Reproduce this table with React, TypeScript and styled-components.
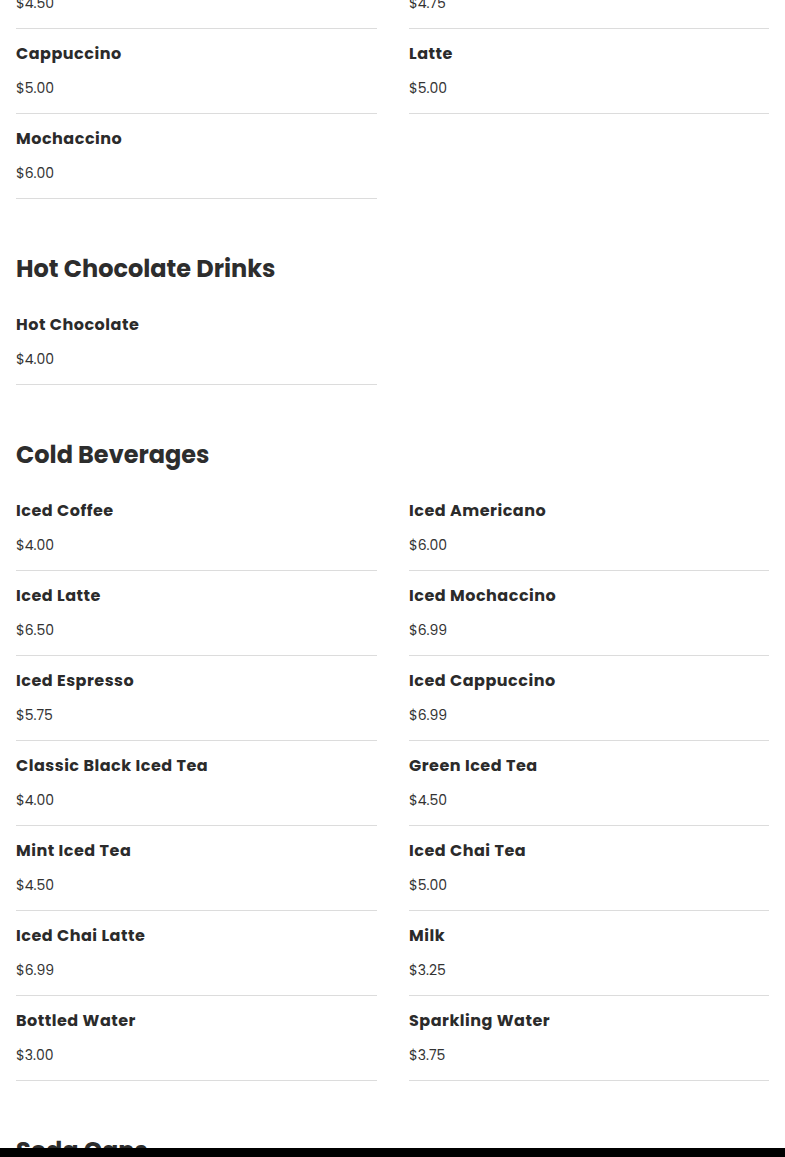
import React from "react";
import styled, { createGlobalStyle } from "styled-components";

interface MenuItem {
	name: string;
	price: string;
}

interface MenuSection {
	title?: string;
	items: MenuItem[];
}

const sections: MenuSection[] = [
	{
		items: [
			{ name: "Americano", price: "$4.50" },
			{ name: "Espresso", price: "$4.75" },
			{ name: "Cappuccino", price: "$5.00" },
			{ name: "Latte", price: "$5.00" },
			{ name: "Mochaccino", price: "$6.00" },
		],
	},
	{
		title: "Hot Chocolate Drinks",
		items: [{ name: "Hot Chocolate", price: "$4.00" }],
	},
	{
		title: "Cold Beverages",
		items: [
			{ name: "Iced Coffee", price: "$4.00" },
			{ name: "Iced Americano", price: "$6.00" },
			{ name: "Iced Latte", price: "$6.50" },
			{ name: "Iced Mochaccino", price: "$6.99" },
			{ name: "Iced Espresso", price: "$5.75" },
			{ name: "Iced Cappuccino", price: "$6.99" },
			{ name: "Classic Black Iced Tea", price: "$4.00" },
			{ name: "Green Iced Tea", price: "$4.50" },
			{ name: "Mint Iced Tea", price: "$4.50" },
			{ name: "Iced Chai Tea", price: "$5.00" },
			{ name: "Iced Chai Latte", price: "$6.99" },
			{ name: "Milk", price: "$3.25" },
			{ name: "Bottled Water", price: "$3.00" },
			{ name: "Sparkling Water", price: "$3.75" },
		],
	},
	{
		title: "Soda Cans",
		items: [],
	},
];

function App(): JSX.Element {
	return (
		<>
			<GlobalStyle />
			<Page>
				{sections.map((section, i) => (
					<Section key={i}>
						{section.title && <Heading>{section.title}</Heading>}
						<Grid>
							{section.items.map((item) => (
								<Item key={item.name}>
									<Name>{item.name}</Name>
									<Price>{item.price}</Price>
								</Item>
							))}
						</Grid>
					</Section>
				))}
			</Page>
			<BottomBar />
		</>
	);
}

const GlobalStyle = createGlobalStyle`
	html, body {
		margin: 0;
		padding: 0;
		background: #ffffff;
		overflow: hidden;
	}
	body {
		font-family: "Poppins", Inter, "Open Sans", sans-serif;
		color: #2b2b2b;
	}
`;

// page is shown scrolled down, so the top of the first section sits above the frame
const Page = styled.main`
	margin-top: -56px;
	padding: 0 16px;
`;

const Section = styled.section`
	margin-bottom: 54px;
`;

const Heading = styled.h2`
	margin: 0 0 15px;
	font-size: 24px;
	line-height: 32px;
	font-weight: 700;
	color: #2d2d2d;
`;

const Grid = styled.div`
	display: grid;
	grid-template-columns: 361px 360px;
	column-gap: 32px;
`;

const Item = styled.div`
	padding: 13px 0 15px;
	border-bottom: 1px solid #dcdcdc;
`;

const Name = styled.h3`
	margin: 0 0 12px;
	font-size: 16px;
	line-height: 24px;
	font-weight: 700;
	letter-spacing: 0.5px;
	color: #2b2b2b;
`;

const Price = styled.p`
	margin: 0;
	font-size: 14px;
	line-height: 20px;
	color: #333333;
`;

const BottomBar = styled.div`
	position: fixed;
	left: 0;
	right: 0;
	bottom: 0;
	height: 9px;
	background: #000000;
`;

export default App;
